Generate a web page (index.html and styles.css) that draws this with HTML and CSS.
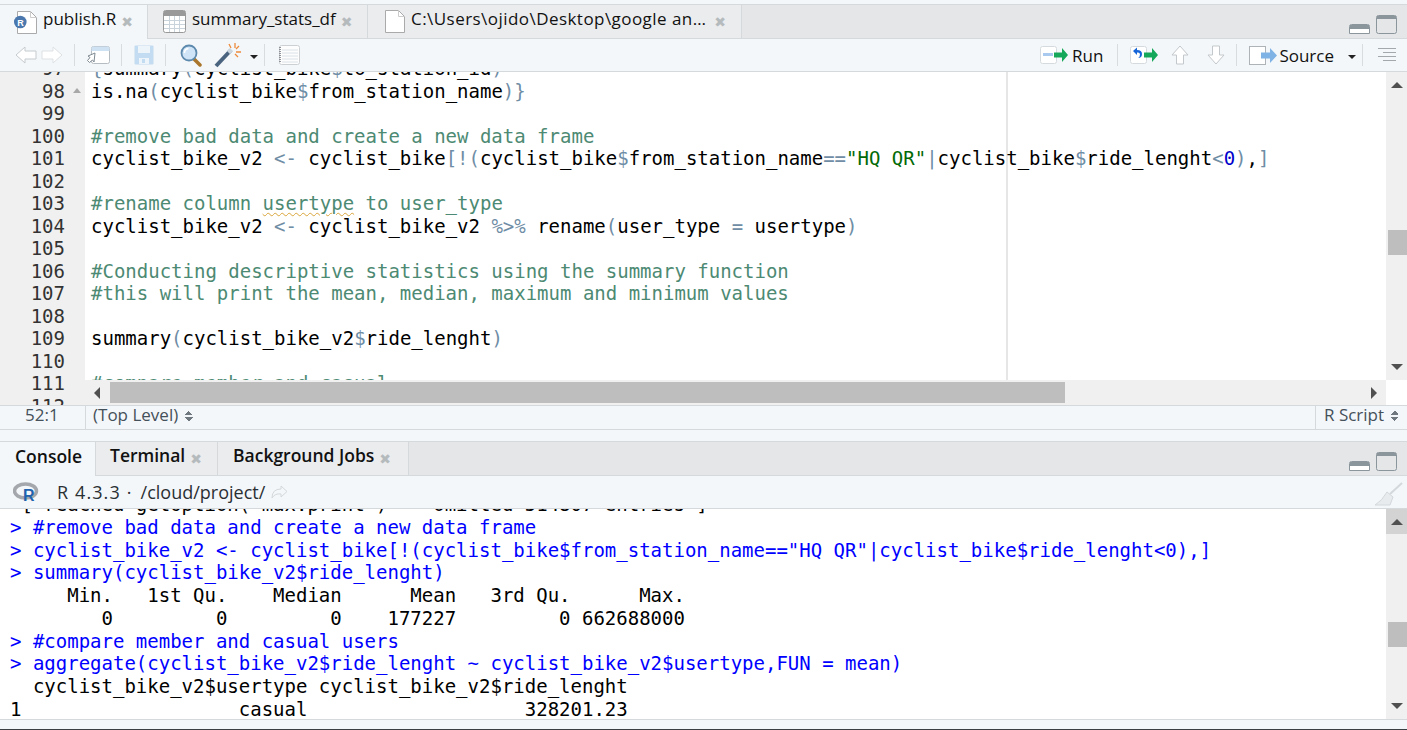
FILE: index.html
```html
<!DOCTYPE html>
<html lang="en">
<head>
  <meta charset="UTF-8" />
  <title>RStudio</title>
  <link rel="stylesheet" href="styles.css">
</head>
<body>

<!-- Source pane -->
<div class="pane source-pane">
  <div class="tabbar">
    <div class="tab active tab-publish">
      <svg class="tab-icon" width="23" height="23" viewBox="0 0 23 23"><path d="M3.5.5h13l6 6v16h-19z" fill="#fff" stroke="#aaa"/><path d="M16.500.5v6h6" fill="none" stroke="#ccc"/><circle cx="6.300" cy="11" r="6.300" fill="#4a77ad"/><text x="3.300" y="14.500" class="r-mini">R</text></svg>
      <span class="label">publish.R</span><span class="close">&#10006;</span>
    </div>
    <div class="tab tab-data">
      <svg class="tab-icon" width="23" height="23" viewBox="0 0 23 23"><rect x=".5" y=".5" width="22" height="22" rx="2" fill="#fff" stroke="#999"/><path d="M1 3.500h21" stroke="#999" stroke-width="5"/><path d="M1 10.500h21M1 14.500h21M1 18.500h21M6.500 6v16M11.500 6v16M16.500 6v16" stroke="#c9d3dc"/></svg>
      <span class="label">summary_stats_df</span><span class="close">&#10006;</span>
    </div>
    <div class="tab tab-file">
      <svg class="tab-icon" width="20" height="23" viewBox="0 0 20 23"><path d="M.5.5h13l6 6v16H.5z" fill="#fff" stroke="#aaa"/><path d="M13.500.5v6h6" fill="none" stroke="#ccc"/></svg>
      <span class="label">C:\Users\ojido\Desktop\google an&hellip;</span><span class="close">&#10006;</span>
    </div>
    <div class="pane-btns">
      <svg width="21" height="10" viewBox="0 0 21 10"><path d="M.5 9.500v-7q0-2 2-2h16q2 0 2 2v7z" fill="#fff" stroke="#8b959c"/><path d="M1 1h19v4H1z" fill="#8b959c"/></svg>
      <svg width="21" height="19" viewBox="0 0 21 19"><rect x=".5" y=".5" width="20" height="18" rx="2" fill="none" stroke="#8b959c"/><path d="M1 1h19v3H1z" fill="#8b959c"/></svg>
    </div>
  </div>

  <div class="toolbar">
    <svg class="ic-arrows" width="48" height="18" viewBox="0 0 48 18"><path d="M1 9l9-8v4h11v8H10v4z" fill="#fff" stroke="#c5cbcf"/><path d="M47 9l-9-8v4H27v8h11v4z" fill="#fff" stroke="#dde1e4"/></svg>
    <i class="sep"></i>
    <svg class="ic-show" width="24" height="20" viewBox="0 0 24 20"><rect x="5.500" y="1.500" width="18" height="17" rx="2" fill="#fff" stroke="#b5bcc2"/><path d="M5.500 6h18v-3q0-1.500-2-1.500h-14q-2 0-2 1.500z" fill="#cfe2f3"/><path d="M9 8l-7 3 2 1.500-2.500 3 2 2 3-2.500 1.500 2z" fill="#fff" stroke="#7f8a92"/></svg>
    <i class="sep"></i>
    <svg class="ic-save" width="20" height="20" viewBox="0 0 20 20"><path d="M.5 1.500q0-1 1-1h17q1 0 1 1v17q0 1-1 1h-17q-1 0-1-1z" fill="#c3dcf1"/><path d="M4 1h12v7H4z" fill="#edf4fa"/><path d="M5 13h10v6H5z" fill="#edf4fa"/><path d="M8 14h3v4H8z" fill="#c3dcf1"/></svg>
    <i class="sep"></i>
    <svg class="ic-find" width="22" height="24" viewBox="0 0 22 24"><path d="M13 15l7 7" stroke="#a9762c" stroke-width="3.500" stroke-linecap="round"/><circle cx="9" cy="10" r="7.500" fill="#cfe4f7" stroke="#5d89ad" stroke-width="1.800"/><path d="M4.500 10a4.500 4.500 0 0 1 4-4.500" stroke="#fff" stroke-width="1.500" fill="none"/></svg>
    <svg class="ic-wand" width="28" height="26" viewBox="0 0 28 26"><path d="M2 24L17 8" stroke="#4a6480" stroke-width="4"/><path d="M14.500 10.500l3-3" stroke="#ccd6de" stroke-width="4"/><path d="M21 1v5M25 4l-3 3M27 10h-5M24 15l-3-3M15 2l2 4" stroke="#ee8a3c" stroke-width="1.300"/></svg>
    <i class="caret"></i>
    <i class="sep sep-notes"></i>
    <svg class="ic-notes" width="22" height="20" viewBox="0 0 22 20"><rect x="1.500" y=".5" width="20" height="19" rx="2" fill="#fdfdfd" stroke="#ccd0d3"/><path d="M4 5h16M4 8h16M4 11h16M4 14h16M4 17h16" stroke="#dbe2e8"/><path d="M2 2v16" stroke="#8d9398" stroke-dasharray="1 1" stroke-width="2"/></svg>

    <div class="toolbar-right">
      <svg class="ic-run" width="28" height="18" viewBox="0 0 28 18"><rect x=".5" y=".5" width="16" height="17" rx="2" fill="#fff" stroke="#d5dade"/><path d="M3 7h10v3H3z" fill="#a9c9ee"/><path d="M14 6.500h8V2l6 7-6 7v-4.500h-8z" fill="#16a85a"/></svg>
      <span class="btn-label">Run</span>
      <i class="sep sep-run"></i>
      <svg class="ic-rerun" width="28" height="18" viewBox="0 0 28 18"><rect x=".5" y=".5" width="16" height="17" rx="2" fill="#fff" stroke="#d5dade"/><path d="M3 5l4-3.500V4q5 0 5 4t-4 4q2-1 2-3.500T7 6.500V9z" fill="#1565d8"/><path d="M14 6.500h8V2l6 7-6 7v-4.500h-8z" fill="#16a85a"/></svg>
      <svg class="ic-up" width="18" height="20" viewBox="0 0 18 20"><path d="M9 1l8 9h-4.500v9h-7v-9H1z" fill="#fff" stroke="#c3c8cc"/></svg>
      <svg class="ic-down" width="18" height="20" viewBox="0 0 18 20"><path d="M9 19l8-9h-4.500V1h-7v9H1z" fill="#fff" stroke="#c3c8cc"/></svg>
      <i class="sep sep-source"></i>
      <svg class="ic-source" width="28" height="19" viewBox="0 0 28 19"><rect x=".5" y=".5" width="16" height="18" fill="#fff" stroke="#aeb3b7"/><path d="M12 6.500h9V2l7 7.500-7 7.500v-4.500h-9z" fill="#7fb2e5"/></svg>
      <span class="btn-label btn-source">Source</span>
      <i class="caret"></i>
      <i class="sep sep-outline"></i>
      <svg class="ic-outline" width="18" height="14" viewBox="0 0 18 14"><path d="M0 .5h18M5 4.500h13M0 8.500h18M5 12.500h13" stroke="#a3a8ac"/></svg>
    </div>
  </div>

  <div class="editor">
    <div class="gutter">
      <div class="gline">97</div>
      <div class="gline fold">98</div>
      <div class="gline">99</div>
      <div class="gline">100</div>
      <div class="gline">101</div>
      <div class="gline">102</div>
      <div class="gline">103</div>
      <div class="gline">104</div>
      <div class="gline">105</div>
      <div class="gline">106</div>
      <div class="gline">107</div>
      <div class="gline">108</div>
      <div class="gline">109</div>
      <div class="gline">110</div>
      <div class="gline">111</div>
      <div class="gline">112</div>
    </div>
    <div class="code">
      <div class="margin-line"></div>
      <div class="cline"><b>{</b>summary<b>(</b>cyclist_bike<b>$</b>to_station_id<b>)</b></div>
      <div class="cline">is.na<b>(</b>cyclist_bike<b>$</b>from_station_name<b>)}</b></div>
      <div class="cline"></div>
      <div class="cline cm">#remove bad data and create a new data frame</div>
      <div class="cline">cyclist_bike_v2 <b>&lt;-</b> cyclist_bike<b>[!(</b>cyclist_bike<b>$</b>from_station_name<b>==</b><em>"HQ QR"</em><b>|</b>cyclist_bike<b>$</b>ride_lenght<b>&lt;</b><u>0</u><b>)</b>,<b>]</b></div>
      <div class="cline"></div>
      <div class="cline cm">#rename column <span class="spell">usertype</span> to user_type</div>
      <div class="cline">cyclist_bike_v2 <b>&lt;-</b> cyclist_bike_v2 <b>%&gt;%</b> rename<b>(</b>user_type <b>=</b> usertype<b>)</b></div>
      <div class="cline"></div>
      <div class="cline cm">#Conducting descriptive statistics using the summary function</div>
      <div class="cline cm">#this will print the mean, median, maximum and minimum values</div>
      <div class="cline"></div>
      <div class="cline">summary<b>(</b>cyclist_bike_v2<b>$</b>ride_lenght<b>)</b></div>
      <div class="cline"></div>
      <div class="cline cm">#compare member and casual</div>
    </div>
    <div class="vscroll">
      <i class="arr-up"></i>
      <div class="vtrack"><div class="vthumb"></div></div>
      <i class="arr-down"></i>
    </div>
    <div class="hscroll">
      <i class="arr-left"></i>
      <div class="hthumb"></div>
      <i class="arr-right"></i>
    </div>
  </div>

  <div class="statusbar">
    <div class="st-pos">52:1</div>
    <div class="st-scope">(Top Level) <i class="updown"></i></div>
    <div class="st-type">R Script <i class="updown"></i></div>
  </div>
</div>

<!-- Console pane -->
<div class="pane console-pane">
  <div class="tabbar">
    <div class="tab active bold tab-console"><span class="label">Console</span></div>
    <div class="tab bold tab-term"><span class="label">Terminal</span><span class="close">&#10006;</span></div>
    <div class="tab bold tab-jobs"><span class="label">Background Jobs</span><span class="close">&#10006;</span></div>
    <div class="pane-btns">
      <svg width="21" height="10" viewBox="0 0 21 10"><path d="M.5 9.500v-7q0-2 2-2h16q2 0 2 2v7z" fill="#fff" stroke="#8b959c"/><path d="M1 1h19v4H1z" fill="#8b959c"/></svg>
      <svg width="21" height="19" viewBox="0 0 21 19"><rect x=".5" y=".5" width="20" height="18" rx="2" fill="none" stroke="#8b959c"/><path d="M1 1h19v3H1z" fill="#8b959c"/></svg>
    </div>
  </div>
  <div class="console-bar">
    <svg class="ic-r" width="27" height="20" viewBox="0 0 27 20"><ellipse cx="12.500" cy="9" rx="11" ry="7" fill="none" stroke="#a4a7ab" stroke-width="3.500"/><text x="10" y="19" class="r-big">R</text></svg>
    <span class="r-version">R 4.3.3</span><span class="dot">&middot;</span><span>/cloud/project/</span>
    <svg class="ic-share" width="18" height="14" viewBox="0 0 18 14"><path d="M11 1l6 5.500-6 5.500V9Q5 8 2 13 2 4 11 4z" fill="#f4f7f9" stroke="#d3d8dc"/></svg>
    <svg class="ic-broom" width="30" height="24" viewBox="0 0 30 24"><path d="M28 1L16 12" stroke="#d3d8dc" stroke-width="2"/><path d="M13 10l6 5-3 8H1q7-4 12-13z" fill="#e7ebee" stroke="#d3d8dc"/></svg>
  </div>
  <div class="console">
    <div class="ctext">
      <div class="cons-line"> [ reached getOption("max.print") -- omitted 514807 entries ]</div>
      <div class="cons-line in">&gt; #remove bad data and create a new data frame</div>
      <div class="cons-line in">&gt; cyclist_bike_v2 &lt;- cyclist_bike[!(cyclist_bike$from_station_name=="HQ QR"|cyclist_bike$ride_lenght&lt;0),]</div>
      <div class="cons-line in">&gt; summary(cyclist_bike_v2$ride_lenght)</div>
      <div class="cons-line">     Min.   1st Qu.    Median      Mean   3rd Qu.      Max. </div>
      <div class="cons-line">        0         0         0    177227         0 662688000 </div>
      <div class="cons-line in">&gt; #compare member and casual users</div>
      <div class="cons-line in">&gt; aggregate(cyclist_bike_v2$ride_lenght ~ cyclist_bike_v2$usertype,FUN = mean)</div>
      <div class="cons-line">  cyclist_bike_v2$usertype cyclist_bike_v2$ride_lenght</div>
      <div class="cons-line">1                   casual                   328201.23</div>
    </div>
    <div class="vscroll">
      <div class="arr-box"><i class="arr-up"></i></div>
      <div class="vtrack"><div class="vthumb"></div></div>
      <i class="arr-down"></i>
    </div>
  </div>
</div>

</body>
</html>
```

FILE: styles.css
```css
html, body {
  margin: 0;
  padding: 0;
  height: 730px;
  overflow: hidden;
}
body {
  font-family: "Open Sans", Arial, sans-serif;
  background-color: #f4f7f9;
  box-sizing: border-box;
  padding-top: 4px;
  border-bottom: 1px solid #3a3f44;
}
.pane {
  border-top: 1px solid #d6d9db;
}
.tabbar {
  height: 33px;
  background-color: #e5e6e8;
  border-bottom: 1px solid #d6d9db;
  display: flex;
}
.tab {
  display: flex;
  align-items: center;
  background-color: #ebecee;
  border-right: 1px solid #d6d9db;
  font-size: 17px;
  color: #111;
  box-sizing: border-box;
  height: 33px;
  padding-left: 15px;
  flex: none;
}
.tab.active {
  background-color: #f4f7f9;
  height: 34px;
}
.label { margin-bottom: 7px; }
.tab-publish { width: 148px; padding-left: 14px; }
.tab-data { width: 220px; }
.tab-file { width: 374px; padding-left: 17px; }
.tab-file .label { letter-spacing: .45px; }
.tab-icon { margin-right: 6px; flex: none; }
.r-mini {
  font-size: 9px;
  font-weight: 700;
  fill: #fff;
  font-family: "Liberation Sans", sans-serif;
}
.close {
  color: #b5babd;
  font-size: 14px;
  margin-left: 5px;
  font-family: "DejaVu Sans", sans-serif;
}
.tab-file .close { margin-left: 8px; }
.pane-btns {
  margin-left: auto;
  display: flex;
  align-items: flex-end;
  gap: 6px;
  padding: 0 10px 4px 0;
}
.bold { font-weight: 600; font-size: 17.500px; }
.tab-console { width: 96px; }
.tab-term { width: 122px; padding-left: 14px; }
.tab-jobs { width: 191px; }

/* toolbars */
.toolbar {
  height: 32px;
  display: flex;
  align-items: center;
  padding-left: 15px;
  border-bottom: 1px solid #d6d9db;
}
.sep {
  width: 1px;
  height: 22px;
  background-color: #d8dcdf;
  margin: 0 11px;
  flex: none;
}
.ic-save { margin-left: 1px; }
.ic-find { margin-left: 3px; }
.ic-wand { margin-left: 12px; }
.sep-notes { margin: 0 13px 0 6px; }
.caret {
  width: 0;
  height: 0;
  border-left: 4px solid transparent;
  border-right: 4px solid transparent;
  border-top: 4px solid #222;
  margin-left: 8px;
  margin-top: 3px;
}
.toolbar-right {
  margin-left: auto;
  display: flex;
  align-items: center;
  padding-right: 11px;
}
.btn-label {
  font-size: 17px;
  color: #111;
  margin-left: 4px;
}
.btn-source { margin-left: 2px; }
.sep-run { margin: 0 12px 0 14px; }
.ic-up { margin-left: 13px; }
.ic-down { margin-left: 18px; }
.sep-source { margin: 0 12px 0 11px; }
.toolbar-right .btn-label + .caret { margin-left: 14px; }
.sep-outline { margin: 0 15px 0 6px; }

/* editor */
.editor {
  height: 333px;
  display: flex;
  position: relative;
  overflow: hidden;
  background: white;
  font-family: "DejaVu Sans Mono", monospace;
  font-size: 19px;
  line-height: 22.540px;
}
.gutter {
  width: 85px;
  flex: none;
  background-color: #f0f0f0;
  margin-top: -15px;
  color: #333;
  text-align: right;
}
.gline {
  height: 22.540px;
  padding-right: 20px;
  position: relative;
}
.fold::after {
  content: "";
  position: absolute;
  right: 4px;
  top: 8px;
  border-left: 4px solid transparent;
  border-right: 4px solid transparent;
  border-bottom: 5px solid #a8a8a8;
}
.code {
  flex: 1;
  position: relative;
  margin-top: -15px;
  padding-left: 6px;
  color: #000;
}
.margin-line {
  position: absolute;
  left: 921px;
  top: 0;
  bottom: 0;
  width: 2px;
  background-color: #e6e6e6;
}
.cline { height: 22.540px; position: relative; white-space: pre; }
.cline b { font-weight: normal; color: #6f8da5; }
.cline em { font-style: normal; color: #036a07; }
.cline u { text-decoration: none; color: #0000cd; }
.cm { color: #4d8a73; }
.spell {
  text-decoration: underline wavy #d9a53a 1px;
  text-underline-offset: 2px;
}
.vscroll {
  position: absolute;
  top: 0;
  right: 0;
  width: 21px;
  height: 308px;
  background-color: #f0f0f0;
  display: flex;
  flex-direction: column;
  align-items: center;
}
.arr-up, .arr-down {
  display: block;
  width: 0;
  height: 0;
  flex: none;
  border-left: 6px solid transparent;
  border-right: 6px solid transparent;
}
.arr-up {
  border-bottom: 6px solid #505050;
  margin-top: 10px;
}
.arr-down {
  border-top: 6px solid #505050;
  margin-bottom: 10px;
}
.arr-box {
  width: 100%;
  height: 25px;
  background-color: #d3d3d3;
  display: flex;
  justify-content: center;
  flex: none;
}
.vtrack {
  flex: 1;
  width: 100%;
  position: relative;
}
.vthumb {
  position: absolute;
  right: 0;
  top: 142px;
  width: 19px;
  height: 25px;
  background-color: #bebebe;
}
.hscroll {
  position: absolute;
  left: 85px;
  right: 21px;
  bottom: 0;
  height: 25px;
  background-color: #f0f0f0;
  display: flex;
  align-items: center;
}
.arr-left, .arr-right {
  display: block;
  width: 0;
  height: 0;
  flex: none;
  border-top: 6px solid transparent;
  border-bottom: 6px solid transparent;
}
.arr-left {
  border-right: 6px solid #505050;
  margin-left: 9px;
}
.arr-right {
  border-left: 6px solid #505050;
  margin-left: auto;
  margin-right: 9px;
}
.hthumb {
  width: 955px;
  height: 21px;
  margin-left: 10px;
  background-color: #bebebe;
}

/* status */
.statusbar {
  height: 23px;
  display: flex;
  border-top: 1px solid #d6d9db;
  border-bottom: 1px solid #d6d9db;
  font-size: 17px;
  color: #44505a;
  line-height: 18px;
  margin-bottom: 11px;
}
.st-pos {
  width: 86px;
  padding-left: 25px;
  box-sizing: border-box;
  border-right: 1px solid #d6d9db;
}
.st-scope { padding-left: 7px; flex: 1; }
.st-type {
  border-left: 1px solid #d6d9db;
  width: 92px;
  box-sizing: border-box;
  padding-left: 8px;
}
.updown {
  display: inline-block;
  width: 8px;
  height: 10px;
  margin-left: 2px;
  background:
    linear-gradient(135deg, transparent 50%, #70787f 50%) 0 0 / 4px 4px no-repeat,
    linear-gradient(225deg, transparent 50%, #70787f 50%) 4px 0 / 4px 4px no-repeat,
    linear-gradient(45deg, transparent 50%, #70787f 50%) 0 6px / 4px 4px no-repeat,
    linear-gradient(315deg, transparent 50%, #70787f 50%) 4px 6px / 4px 4px no-repeat;
}

/* console */
.console-bar {
  height: 32px;
  display: flex;
  align-items: center;
  padding-left: 13px;
  border-bottom: 1px solid #d6d9db;
  font-size: 18px;
  color: #2a2f33;
  position: relative;
}
.ic-r { margin-right: 17px; }
.r-version { letter-spacing: 1.100px; }
.r-big {
  font-size: 16px;
  font-weight: 700;
  fill: #1f62ad;
  font-family: "Liberation Sans", sans-serif;
}
.dot { margin: 0 9px 0 6px; }
.ic-share { margin-left: 5px; }
.ic-broom {
  position: absolute;
  right: 3px;
  top: 6px;
}
.console {
  height: 210px;
  position: relative;
  overflow: hidden;
  background: white;
  border-bottom: 1px solid #d6d9db;
  font-family: "DejaVu Sans Mono", monospace;
  font-size: 19px;
  line-height: 22.750px;
}
.ctext {
  margin-top: -16px;
  padding-left: 10px;
  color: #000;
}
.cons-line { height: 22.750px; white-space: pre; }
.in { color: #0000ff; }
.console .vscroll { height: 210px; }
.console .vthumb { top: 88px; }
```
